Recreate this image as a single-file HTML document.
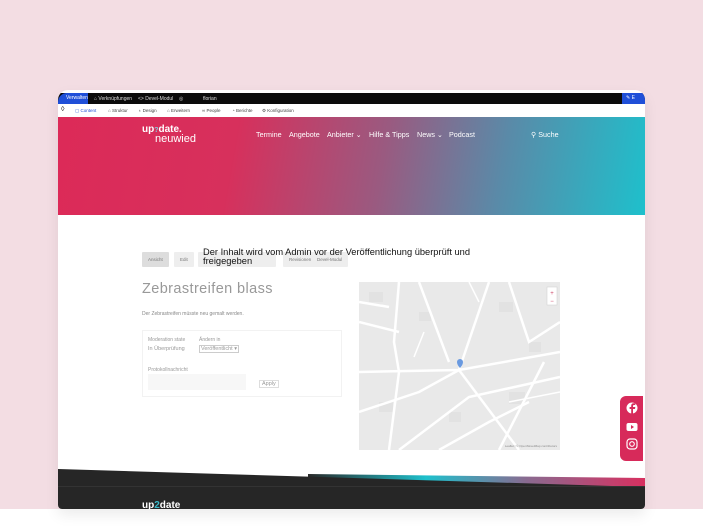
<!DOCTYPE html><html><head><meta charset="utf-8"><style>
*{margin:0;padding:0;box-sizing:border-box}
body{width:703px;height:532px;overflow:hidden;background:#fff;font-family:"Liberation Sans",sans-serif;position:relative}
.bg{position:absolute;left:0;top:0;width:703px;height:509px;background:#f3dde3}
.card{position:absolute;left:58px;top:90px;width:587px;height:419px;background:#fff;border-radius:10px 10px 4px 4px;overflow:hidden;box-shadow:0 6px 14px rgba(0,0,0,.08)}
.abs{position:absolute}
.bar{left:0;top:3px;width:587px;height:11px;background:#0b0b0b;font-size:5px;color:#ddd}
.tb{left:0;top:14px;width:587px;height:13px;background:#fff;font-size:4.5px;color:#444}
.hero{left:0;top:27px;width:587px;height:98px;background:linear-gradient(100deg,#dc2a58 0%,#d7305c 30%,#9a5a80 55%,#5a8aa8 75%,#1ec0cc 100%)}
.nav{color:#fff;font-size:7.2px;top:13px}
.btn{background:#eee;color:#777;font-size:4.5px;height:15px;line-height:15px;padding:0 6px;top:162px;border-radius:1px}
</style></head><body>
<div class="bg"></div>
<div class="card">
 <div class="abs bar">
  <div class="abs" style="left:0;top:0;width:30px;height:11px;background:#1f4fd8;color:#fff;line-height:11px;padding-left:8px;border-radius:9px 0 0 0">Verwalten</div>
  <span class="abs" style="left:36px;top:3px">⌂ Verknüpfungen</span>
  <span class="abs" style="left:80px;top:3px">&lt;&gt; Devel-Modul</span>
  <span class="abs" style="left:121px;top:3px">◎</span>
  <span class="abs" style="left:145px;top:3px">florian</span>
  <div class="abs" style="left:564px;top:0;width:23px;height:11px;background:#1f4fd8;color:#fff;line-height:11px;padding-left:4px">✎ E</div>
 </div>
 <div class="abs tb">
  <span class="abs" style="left:3px;top:2px;font-size:7px;color:#000">◊</span>
  <span class="abs" style="left:17px;top:4px;color:#1f4fd8">▢ Content</span>
  <span class="abs" style="left:50px;top:4px">⌂ Struktur</span>
  <span class="abs" style="left:80px;top:4px">♁ Design</span>
  <span class="abs" style="left:109px;top:4px">⌂ Erweitern</span>
  <span class="abs" style="left:144px;top:4px">∞ People</span>
  <span class="abs" style="left:174px;top:4px">◔ Berichte</span>
  <span class="abs" style="left:204px;top:4px">⚙ Konfiguration</span>
 </div>
 <div class="abs hero">
  <div class="abs" style="left:84px;top:8px;color:#fff;font-weight:bold;font-size:10px;line-height:9px">up<span style="color:#7fd3e0;font-size:7px">?</span>date.<br><span style="font-weight:normal;font-size:11px;padding-left:13px">neuwied</span></div>
  <span class="abs nav" style="left:198px">Termine</span>
  <span class="abs nav" style="left:231px">Angebote</span>
  <span class="abs nav" style="left:269px">Anbieter ⌄</span>
  <span class="abs nav" style="left:311px">Hilfe &amp; Tipps</span>
  <span class="abs nav" style="left:359px">News ⌄</span>
  <span class="abs nav" style="left:391px">Podcast</span>
  <span class="abs nav" style="left:473px">⚲ Suche</span>
 </div>
 <div class="abs btn" style="left:84px;background:#ddd">Ansicht</div>
 <div class="abs btn" style="left:116px">Edit</div>
 <div class="abs btn" style="left:140px;width:78px"></div>
 <div class="abs btn" style="left:225px">Revisionen</div>
 <div class="abs btn" style="left:253px">Devel-Modul</div>
 <div class="abs" style="left:145px;top:158px;font-size:9.3px;line-height:9px;color:#111">Der Inhalt wird vom Admin vor der Veröffentlichung überprüft und<br>freigegeben</div>
 <div class="abs" style="left:84px;top:191px;font-size:14.5px;color:#999;letter-spacing:.4px">Zebrastreifen blass</div>
 <div class="abs" style="left:84px;top:221px;font-size:5px;color:#888">Der Zebrastreifen müsste neu gemalt werden.</div>
 <div class="abs" style="left:84px;top:240px;width:200px;height:67px;border:1px solid #f2f2f2;font-size:5px;color:#999">
  <span class="abs" style="left:5px;top:6px">Moderation state</span>
  <span class="abs" style="left:5px;top:15px;font-size:5.5px">In Überprüfung</span>
  <span class="abs" style="left:56px;top:6px">Ändern in</span>
  <span class="abs" style="left:56px;top:14px;border:1px solid #ccc;padding:0 1px;font-size:5.5px">Veröffentlicht ▾</span>
  <span class="abs" style="left:5px;top:36px">Protokollnachricht</span>
  <div class="abs" style="left:5px;top:43px;width:98px;height:16px;background:#f7f7f7"></div>
  <span class="abs" style="left:116px;top:49px;border:1px solid #ddd;padding:0 2px;font-size:5.5px">Apply</span>
 </div>
 <svg class="abs" style="left:301px;top:192px" width="201" height="168" viewBox="0 0 201 168">
  <rect width="201" height="168" fill="#e9e9e9"/>
  <g fill="#e2e2e2"><rect x="10" y="10" width="14" height="10"/><rect x="60" y="30" width="12" height="9"/><rect x="140" y="20" width="14" height="10"/><rect x="150" y="110" width="16" height="12"/><rect x="20" y="120" width="14" height="10"/><rect x="90" y="130" width="12" height="10"/><rect x="170" y="60" width="12" height="10"/></g>
  <g stroke="#fff" stroke-width="2.5" fill="none">
   <path d="M0 90 L100 88 L201 70"/><path d="M40 0 L35 60 L40 90 L30 168"/><path d="M0 130 L60 110 L100 88"/>
   <path d="M100 88 L160 168"/><path d="M130 0 L100 88"/><path d="M60 0 L90 80"/><path d="M40 168 L110 115 L201 95"/>
   <path d="M150 0 L170 60 L201 40"/><path d="M80 168 L130 140 L170 120"/><path d="M0 40 L40 50"/><path d="M185 80 L140 168"/>
   <path d="M0 20 L30 25"/><path d="M65 50 L55 75" stroke-width="1.5"/><path d="M150 120 L201 110" stroke-width="1.5"/><path d="M110 0 L120 20" stroke-width="1.5"/>
  </g>
  <path d="M98 80a3 3 0 1 1 6 0c0 3-3 6-3 6s-3-3-3-6z" fill="#6a9ae0"/>
  <rect x="188" y="5" width="10" height="18" fill="#fff" stroke="#ccc" stroke-width=".5"/>
  <text x="193" y="13" font-size="6" fill="#c46" text-anchor="middle">+</text><text x="193" y="21" font-size="6" fill="#c46" text-anchor="middle">−</text>
  <text x="198" y="165" font-size="3" fill="#888" text-anchor="end">Leaflet | © OpenStreetMap contributors</text>
 </svg>
 <div class="abs" style="left:250px;top:380px;width:337px;height:20px;background:linear-gradient(90deg,#2a2a2a,#1ec0cc 35%,#8a6a90 65%,#d83060);clip-path:polygon(0 4px,100% 8px,100% 100%,0 100%)"></div>
 <div class="abs" style="left:0;top:379px;width:587px;height:60px;background:#262626;clip-path:polygon(0 0,100% 18px,100% 100%,0 100%)"></div>
 <div class="abs" style="left:0;top:396px;width:587px;height:1px;background:#333"></div>
 <div class="abs" style="left:84px;top:410px;color:#fff;font-weight:bold;font-size:10px">up<span style="color:#3ab8c8">2</span>date</div>
</div>
<div class="abs" style="left:620px;top:396px;width:23px;height:65px;background:#d72a5a;border-radius:6px 0 0 6px;color:#fff">
 <svg class="abs" style="left:6px;top:6px" width="12" height="52" viewBox="0 0 12 52"><circle cx="6" cy="6" r="5.5" fill="#fff"/><path d="M7 12V7h2l.3-2H7V4c0-.6.3-1 1-1h1.3V1.3C8.7 1.2 8.2 1.2 7.6 1.2 6.2 1.2 5.2 2 5.2 3.7V5H3.6v2h1.6v5z" fill="#d72a5a"/><rect x="0.5" y="21" width="11" height="8" rx="2" fill="#fff"/><path d="M5 23v4l3-2z" fill="#d72a5a"/><rect x="1" y="37" width="10" height="10" rx="3" fill="none" stroke="#fff" stroke-width="1.2"/><circle cx="6" cy="42" r="2.3" fill="none" stroke="#fff" stroke-width="1.1"/></svg>
</div>
</body></html>
